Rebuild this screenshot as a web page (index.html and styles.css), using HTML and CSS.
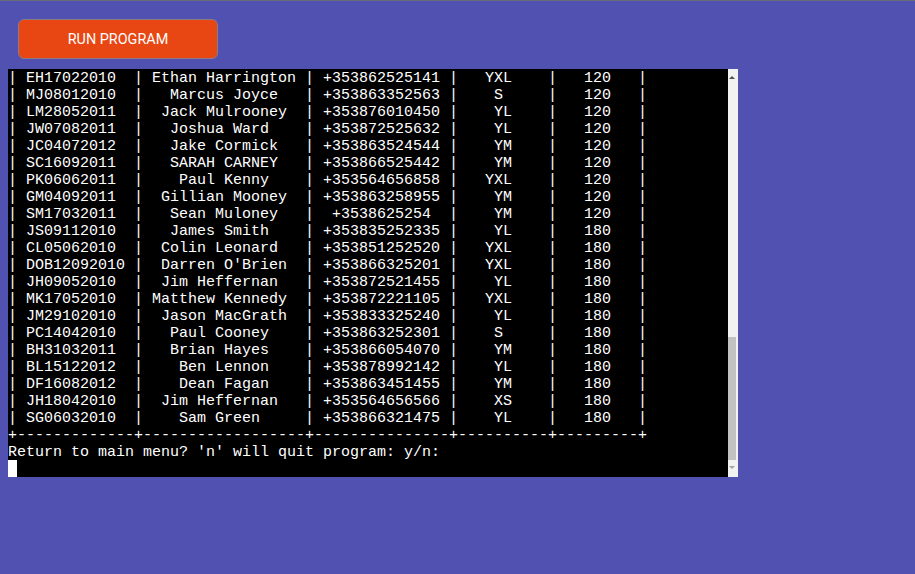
FILE: index.html
```html
<!DOCTYPE html>
<html lang="en">
<head>
<meta charset="utf-8">
<title>Python Terminal</title>
<link rel="stylesheet" href="styles.css">
</head>
<body>
<div class="app">
  <button class="run-btn" type="button">Run Program</button>
  <div class="terminal">
<pre class="screen">| EH17022010  | Ethan Harrington | +353862525141 |   YXL    |   120   |
| MJ08012010  |   Marcus Joyce   | +353863352563 |    S     |   120   |
| LM28052011  |  Jack Mulrooney  | +353876010450 |    YL    |   120   |
| JW07082011  |   Joshua Ward    | +353872525632 |    YL    |   120   |
| JC04072012  |   Jake Cormick   | +353863524544 |    YM    |   120   |
| SC16092011  |   SARAH CARNEY   | +353866525442 |    YM    |   120   |
| PK06062011  |    Paul Kenny    | +353564656858 |   YXL    |   120   |
| GM04092011  |  Gillian Mooney  | +353863258955 |    YM    |   120   |
| SM17032011  |   Sean Muloney   |  +3538625254  |    YM    |   120   |
| JS09112010  |   James Smith    | +353835252335 |    YL    |   180   |
| CL05062010  |  Colin Leonard   | +353851252520 |   YXL    |   180   |
| DOB12092010 |  Darren O'Brien  | +353866325201 |   YXL    |   180   |
| JH09052010  |  Jim Heffernan   | +353872521455 |    YL    |   180   |
| MK17052010  | Matthew Kennedy  | +353872221105 |   YXL    |   180   |
| JM29102010  |  Jason MacGrath  | +353833325240 |    YL    |   180   |
| PC14042010  |   Paul Cooney    | +353863252301 |    S     |   180   |
| BH31032011  |   Brian Hayes    | +353866054070 |    YM    |   180   |
| BL15122012  |    Ben Lennon    | +353878992142 |    YL    |   180   |
| DF16082012  |    Dean Fagan    | +353863451455 |    YM    |   180   |
| JH18042010  |  Jim Heffernan   | +353564656566 |    XS    |   180   |
| SG06032010  |    Sam Green     | +353866321475 |    YL    |   180   |
+-------------+------------------+---------------+----------+---------+
Return to main menu? 'n' will quit program: y/n: 
<span class="cursor"></span></pre>
    <div class="scrollbar">
      <div class="sb-top"><span class="arrow-up"></span></div>
      <div class="sb-thumb"></div>
      <div class="sb-bottom"><span class="arrow-down"></span></div>
    </div>
  </div>
</div>
</body>
</html>
```
FILE: styles.css
```css
html, body {
  margin: 0;
  padding: 0;
}
body {
  background: #5151b1;
  border-top: 1px solid #6b6b78;
  min-height: 573px;
}
.app {
  padding: 18px 0 0 8px;
  display: flex;
  flex-direction: column;
  align-items: flex-start;
}
.run-btn {
  margin-left: 10px;
  width: 200px;
  height: 40px;
  box-sizing: border-box;
  background: #e84612;
  border: 1px solid #8c7a84;
  border-radius: 6px;
  color: #ffffff;
  font-family: Roboto, "Liberation Sans", sans-serif;
  font-size: 14.4px;
  text-transform: uppercase;
  padding: 0;
  cursor: pointer;
}
.terminal {
  margin-top: 10px;
  display: flex;
  height: 408px;
}
.screen {
  margin: 0;
  box-sizing: border-box;
  padding-top: 1px;
  width: 720px;
  height: 408px;
  background: #000000;
  color: #ffffff;
  font-family: "Liberation Mono", "Courier New", monospace;
  font-size: 15px;
  line-height: 17px;
  white-space: pre;
  overflow: hidden;
}
.cursor {
  display: inline-block;
  width: 9px;
  height: 17px;
  background: #ffffff;
  vertical-align: top;
  margin-top: -1px;
}
.scrollbar {
  width: 10px;
  background: #f1f1f1;
  display: flex;
  flex-direction: column;
}
.sb-top {
  height: 268px;
}
.arrow-up {
  display: block;
  width: 0;
  height: 0;
  margin: 7px 0 0 1px;
  border-left: 3px solid transparent;
  border-right: 3px solid transparent;
  border-bottom: 3px solid #505050;
}
.sb-thumb {
  width: 8px;
  height: 123px;
  background: #c1c1c1;
}
.sb-bottom {
  flex: 1;
}
.arrow-down {
  display: block;
  width: 0;
  height: 0;
  margin: 6px 0 0 1px;
  border-left: 3px solid transparent;
  border-right: 3px solid transparent;
  border-top: 3px solid #a3a3a3;
}
```
